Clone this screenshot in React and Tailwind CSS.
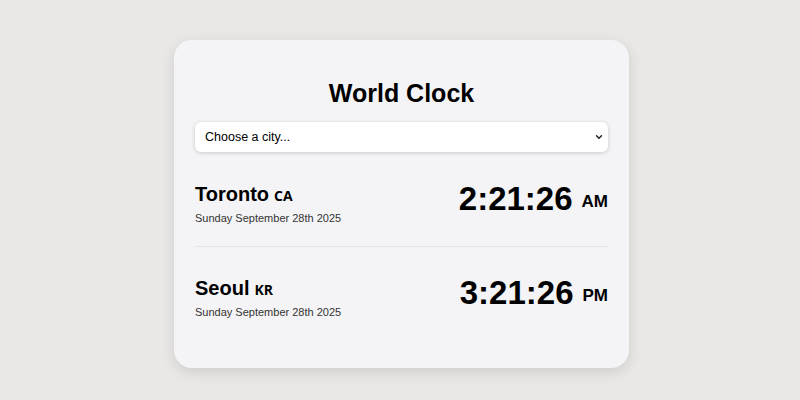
import { useState } from 'react';
import { ChevronDown } from 'lucide-react';

const CLOCKS = [
  { city: 'Toronto', code: 'CA', time: '2:21:26', ampm: 'AM', date: 'Sunday September 28th 2025' },
  { city: 'Seoul', code: 'KR', time: '3:21:26', ampm: 'PM', date: 'Sunday September 28th 2025' },
];

function App() {
  const [city, setCity] = useState('');

  return (
    <div className="min-h-screen bg-[#e9e8e6] flex justify-center pt-10 pl-[3px] font-['Liberation_Sans',Arial,sans-serif] text-black">
      <div className="w-[455px] h-[328px] bg-[#f4f4f6] rounded-[18px] shadow-[0_4px_14px_rgba(0,0,0,0.12)] px-[21px] pt-[38px]">
        <h1 className="text-center text-[25px] font-bold leading-[30px]">World Clock</h1>

        {/* selector de ciudad */}
        <div className="relative mt-[14px]">
          <select
            value={city}
            onChange={e => setCity(e.target.value)}
            className="appearance-none w-full h-[30px] bg-white rounded-[6px] shadow-[0_1px_4px_rgba(0,0,0,0.18)] pl-[10px] pr-6 text-[12.5px] outline-none"
          >
            <option value="">Choose a city...</option>
            <option value="tokyo">Tokyo</option>
            <option value="london">London</option>
          </select>
          <ChevronDown size={10} strokeWidth={3.5} className="absolute right-[4px] top-1/2 -translate-y-1/2 pointer-events-none text-[#222]" />
        </div>

        {CLOCKS.map((c, i) => (
          <div
            key={c.city}
            className={`flex justify-between items-start ${i === 0 ? 'pt-[28px] pb-[21px] border-b border-dotted border-[#d6d6d8]' : 'pt-[27px]'}`}
          >
            <div className="flex flex-col pt-[3px]">
              <div className="flex items-baseline gap-[5px] leading-[23px]">
                <span className="text-[20px] font-bold">{c.city}</span>
                <span className="text-[14px] font-bold font-['Open_Sans',sans-serif]">{c.code}</span>
              </div>
              <span className="mt-[4px] text-[11px] text-[#333] leading-[14px]">{c.date}</span>
            </div>
            <div className="flex items-start gap-[9px]">
              <span className="text-[33px] font-bold leading-[38px]">{c.time}</span>
              <span className="mt-[12px] text-[17px] font-bold leading-[20px]">{c.ampm}</span>
            </div>
          </div>
        ))}
      </div>
    </div>
  );
}

export default App;
